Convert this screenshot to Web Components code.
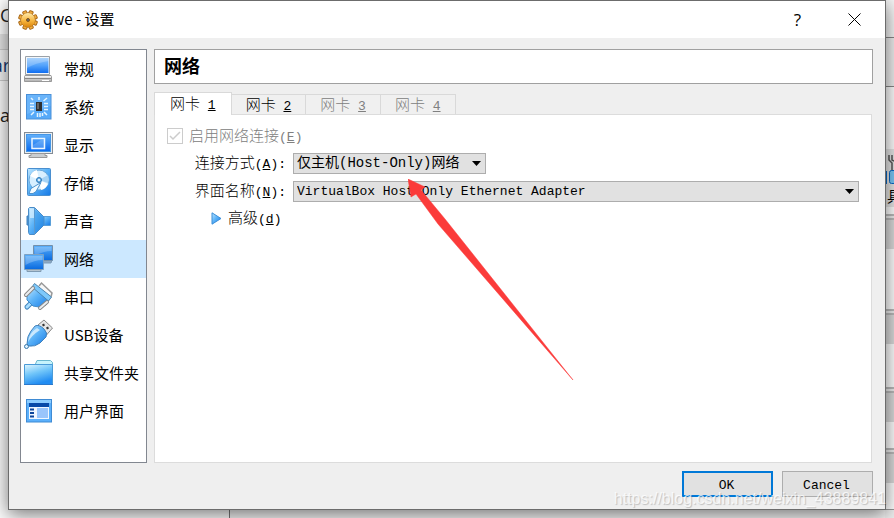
<!DOCTYPE html>
<html lang="zh-CN">
<head>
<meta charset="utf-8">
<title>qwe - 设置</title>
<style>
    body {
        margin: 0;
        min-height: 100vh;
        position: relative;
        overflow: hidden;
        background: #fff;
        color: #000;
        font-family: "Noto Sans CJK SC", sans-serif;
        font-size: 15px;
    }
</style>
</head>
<body>
<desktop-backdrop></desktop-backdrop>
<settings-dialog titulo="qwe - 设置">
    <nav-list slot="nav">
        <nav-item icon="general">常规</nav-item>
        <nav-item icon="system">系统</nav-item>
        <nav-item icon="display">显示</nav-item>
        <nav-item icon="storage">存储</nav-item>
        <nav-item icon="audio">声音</nav-item>
        <nav-item icon="network" selected>网络</nav-item>
        <nav-item icon="serial">串口</nav-item>
        <nav-item icon="usb">USB设备</nav-item>
        <nav-item icon="folder">共享文件夹</nav-item>
        <nav-item icon="ui">用户界面</nav-item>
    </nav-list>
    <page-heading>网络</page-heading>
    <tab-panel>
        <tab-button slot="tabs" number="1" active>网卡</tab-button>
        <tab-button slot="tabs" number="2">网卡</tab-button>
        <tab-button slot="tabs" number="3" disabled>网卡</tab-button>
        <tab-button slot="tabs" number="4" disabled>网卡</tab-button>
        <adapter-form></adapter-form>
    </tab-panel>
    <push-button slot="actions" primary>OK</push-button>
    <push-button slot="actions">Cancel</push-button>
</settings-dialog>
<pointer-arrow></pointer-arrow>
<water-mark>https://blog.csdn.net/weixin_43889841</water-mark>

<script>
const MONO = '"Liberation Mono", "Noto Sans CJK SC", monospace';

const blue = (id) => `
    <linearGradient id="${id}" x1="0" y1="0" x2="1" y2="1">
        <stop offset="0" stop-color="#bfe6ff"/><stop offset=".45" stop-color="#5db4f8"/><stop offset="1" stop-color="#1579e6"/>
    </linearGradient>`;

const ICONS = {
    general: `
        <defs><linearGradient id="g" x1="0" y1="0" x2="0" y2="1"><stop offset="0" stop-color="#93c6fb"/><stop offset=".5" stop-color="#52a2fb"/><stop offset="1" stop-color="#0f6df0"/></linearGradient>
        <linearGradient id="m" x1="0" y1="0" x2="0" y2="1"><stop offset="0" stop-color="#fff"/><stop offset="1" stop-color="#aaa"/></linearGradient></defs>
        <path d="M3.500 3.500h24v18h-24z" fill="#f4f7fa" stroke="#9aa1a8"/>
        <path d="M5 5h21.500v15H5z" fill="url(#g)"/>
        <path d="M5 5h21.500v3q-13 2-21.500 7z" fill="#fff" opacity=".22"/>
        <path d="M3 22.500h26l.5 1v5h-27v-5z" fill="url(#m)" stroke="#999"/>
        <path d="M3 25.500h26" stroke="#888"/><path d="M20 27.500h7" stroke="#fff"/>`,
    system: `
        <rect x="4.500" y="3.500" width="24.500" height="24.500" fill="#56a9f8" stroke="#4a90d8"/>
        <path d="M5 4h23.500v11L5 23z" fill="#8cc8ff" opacity=".35"/>
        <path d="M14 11h6v9h-6z" fill="#30302f"/><path d="M15 12h2v6h-2z" fill="#656565"/>
        <path d="M17 6v3M8 12.500h4M8 15.500h4M8 18.500h4M22 12.500h4M22 15.500h4M22 18.500h4M15.500 22v4M18 22v4M20.500 22v3M21.500 10l3.500-3M9 24l3-3M22 21l3 3M9 7l2 2" stroke="#e4f4ff" stroke-width="1.500"/>`,
    display: `
        <defs><linearGradient id="g" x1="0" y1="0" x2="0" y2="1"><stop offset="0" stop-color="#62b0fa"/><stop offset="1" stop-color="#086af0"/></linearGradient></defs>
        <rect x="2.500" y="3.500" width="28" height="21" fill="#e9eef2" stroke="#848c95"/>
        <rect x="4.500" y="5.500" width="24" height="17" fill="url(#g)" stroke="#4596e6"/>
        <path d="M10 9.500h12.500v10H10z" fill="none" stroke="#eaf5ff" stroke-width="1.500"/><path d="M11 16l8-5h3v8H11z" fill="#fff" opacity=".18"/>
        <path d="M9 24.500h14v2h2v2H7v-2h2z" fill="#c9cdd0" stroke="#999"/>`,
    storage: `
        <defs>${blue('g')}</defs>
        <rect x="5.500" y="1.500" width="23" height="27" rx="1" fill="url(#g)" stroke="#4a8fcf"/>
        <circle cx="17" cy="13" r="10" fill="#d8efff" stroke="#6aa9dc"/>
        <path d="M17 13L8 9a10 10 0 0 1 7-6zM17 13l9 4a10 10 0 0 1-7 6z" fill="#fff"/>
        <path d="M17 13l9-5a10 10 0 0 1 0 8z" fill="#a6d3f5"/>
        <circle cx="17" cy="13" r="2.500" fill="#71b8ed" stroke="#2f77b5"/><circle cx="17" cy="13" r="1" fill="#fff"/>
        <path d="M7 26.500l2-5 10-6-5 9-3 2z" fill="#f4fbff" stroke="#4d93cf"/>`,
    audio: `
        <defs>${blue('g')}</defs>
        <path d="M5 11h3v9H5z" fill="#4b98d9" stroke="#3c80bd"/>
        <path d="M17 11.500h11.500v9H17z" fill="url(#g)" stroke="#5a9fd8"/>
        <path d="M6.500 3.500l1-1h5l9.500 9.500v8l-9.500 9.500h-5l-1-2z" fill="url(#g)" stroke="#4a8cc8"/>
        <path d="M12.500 3v26" stroke="#5a9ad0"/><path d="M8 3.500h4V13H8z" fill="#d9f1ff" opacity=".7"/>
        <path d="M13 4l8.500 8.500v7L13 28z" fill="#2f8de0" opacity=".45"/>`,
    network: `
        <defs><linearGradient id="g" x1="0" y1="0" x2="0" y2="1"><stop offset="0" stop-color="#5cb0fa"/><stop offset="1" stop-color="#0869df"/></linearGradient></defs>
        <path d="M14 17h16l-1 3H14z" fill="#8ca9c3" stroke="#7c9bb8"/>
        <path d="M11.500 2.500h19v15h-19z" fill="url(#g)" stroke="#7490ab"/>
        <path d="M12.500 4h17v4q-8 0-17 5z" fill="#fff" opacity=".22"/>
        <path d="M2.500 11.500h19v15h-19z" fill="url(#g)" stroke="#7da2c4"/>
        <path d="M3.500 13h17v4q-8 0-17 5z" fill="#fff" opacity=".25"/>
        <path d="M5 26.500h14v2H5z" fill="#b6c4cf" stroke="#7f9bb3"/>`,
    serial: `
        <defs>${blue('g')}</defs>
        <path d="M17 5l2.500-3L30 12l-1 4" fill="#f6f6f6" stroke="#999" stroke-width="1.500"/>
        <path d="M10 21l-5 5" stroke="#3d83bd" stroke-width="5" stroke-linecap="round"/><path d="M10 21l-5 5" stroke="#a8ddff" stroke-width="3" stroke-linecap="round"/>
        <path d="M11 6L27 18l-3 6-7 2-6-1-6-6 0-7z" fill="url(#g)" stroke="#3f8bcb"/>
        <path d="M12.500 2.500L29.500 16l-3 4L10 6z" fill="#7dc8fb" stroke="#4d85af"/>
        <path d="M4 14l7-7M18 27l7-6" stroke="#888" stroke-width="4" stroke-linecap="round"/><path d="M4 14l7-7M18 27l7-6" stroke="#e9edf0" stroke-width="2" stroke-linecap="round"/>`,
    usb: `
        <defs>${blue('g')}</defs>
        <path d="M16 6l6-5 8.500 8-6 7z" fill="#e6e6e6" stroke="#888"/>
        <path d="M20.500 6.500l2-1M24.500 9.500l2-1" stroke="#333" stroke-width="2"/>
        <path d="M13 7q4-2 9 3 4 4 2 8l-6 6q-5 4-11 3l-2-2q0-8 4-13z" fill="url(#g)" stroke="#3f80bb"/>
        <path d="M6 23q1-9 9-14l3 2Q10 16 6 23z" fill="#e7f6ff" opacity=".75"/>
        <circle cx="4.500" cy="27.500" r="2" fill="#dff2ff" stroke="#3877aa"/>`,
    folder: `
        <defs><linearGradient id="g" x1="0" y1="0" x2=".4" y2="1"><stop offset="0" stop-color="#e0f7ff"/><stop offset=".5" stop-color="#70c5f9"/><stop offset="1" stop-color="#218cf2"/></linearGradient></defs>
        <path d="M13 8l2-4.500h13.500l2 2V10H13z" fill="#c6f3fc" stroke="#6bb8cf"/>
        <path d="M2.500 7.500h28v20h-28z" fill="url(#g)" stroke="#4a9bd8"/><path d="M2 27.500h29" stroke="#2a79cd"/>`,
    ui: `
        <rect x="4.500" y="4.500" width="25" height="22.500" fill="#5bb0fb" stroke="#3f8bd4"/>
        <path d="M5 5h24v3H5z" fill="#8bccff"/><path d="M7 8h20v4H7z" fill="#0749a8"/>
        <path d="M7 12h20v12H7z" fill="#f0f7ff"/><path d="M15 13h11v10H15z" fill="#99c5fb"/>
        <path d="M8 13.500h4v2H8zM8 17h4v2H8zM8 20.500h4v2H8z" fill="#0b459b"/>`
};

class UiElement extends HTMLElement {
    connectedCallback() {
        this.attachShadow({ mode: 'open' }).innerHTML = this.render();
    }
}

class DesktopBackdrop extends UiElement {
    render() {
        return `
            <style>
                :host {
                    position: absolute;
                    inset: 0;
                    display: grid;
                    grid-template-columns: 229px 1fr 9px;
                    overflow: hidden;
                    background: #fff;
                    font-family: "Open Sans", "Noto Sans CJK SC", sans-serif;
                }
                .left { display: flex; flex-direction: column; gap: 28px; padding-top: 4px; background: linear-gradient(#fff 34px, #e6e6e6 34px 49px, #ccc 49px 50px, #f4f4f4 50px 80px, #ccc 80px 81px, #fcfcfc 81px); }
                .left span { height: 22px; width: 10px; font-size: 18px; line-height: 22px; color: #222; }
                .left .cut { direction: rtl; }
                .left .blue { color: #12356b; }
                .mid { background: #f4f4f4; border-left: 1px solid #777; }
                .right {
                    background: linear-gradient(#f6f6f6 37px, #888 37px 38px, #f0f0f0 38px 86px, #888 86px 87px, #fff 87px 149px, #e7e7e7 149px 207px,
                        #fff 207px 214px, #bbb 214px 216px, #eee 216px 218px, #bbb 218px 220px, #dcdcdc 220px 249px, #fff 249px 309px,
                        #bbb 309px 311px, #eee 311px 313px, #bbb 313px 315px, #dcdcdc 315px 344px, #fff 344px 387px,
                        #bbb 387px 389px, #eee 389px 391px, #bbb 391px 393px, #dcdcdc 393px 422px, #fff 422px 448px,
                        #bbb 448px 450px, #eee 450px 452px, #bbb 452px 454px, #dcdcdc 454px 483px, #fff 483px 509px, #999 509px 510px, #eee 510px);
                    padding-top: 154px;
                    overflow: hidden;
                }
                svg { display: block; }
                .right span { display: block; width: 15px; padding-left: 2px; font-size: 15px; line-height: 20px; }
            </style>
            <div class="left"><span>C</span><span class="cut blue">ar</span><span class="cut">Na</span></div>
            <div class="mid"></div>
            <div class="right">
                <svg width="9" height="32" viewBox="0 0 9 32" fill="none"><path d="M4 1v5l3 3v8M9 7l-2-1V1" stroke="#555" stroke-width="1.500"/><rect x="4.500" y="16.500" width="12" height="13" rx="2" fill="#79c8f8" stroke="#0869c9"/><path d="M1 17v13" stroke="#0869c9" stroke-width="2"/></svg>
                <span>具</span>
            </div>`;
    }
}

class SettingsDialog extends UiElement {
    render() {
        let teeth = '';
        for (let a = 0; a < 360; a += 45) {
            teeth += `<rect x="8" y="0.500" width="4" height="5" rx="1" transform="rotate(${a + 22} 10 10)"/>`;
        }
        return `
            <style>
                :host {
                    position: relative;
                    box-sizing: border-box;
                    display: flex;
                    flex-direction: column;
                    min-height: calc(100vh - 8px);
                    margin: 0 8px 8px;
                    border: 1px solid #6c6c6c;
                    background: #efefef;
                    box-shadow: 0 4px 18px rgba(0, 0, 0, .55);
                }
                header { display: flex; align-items: center; height: 37px; padding: 0 2px 0 9px; background: #fff; }
                h1 { flex: 1; margin: 0; padding: 0 0 2px 5px; font-size: 15px; font-weight: 400; }
                header button { width: 57px; height: 37px; padding: 0; border: 0; background: none; font: 17px "Open Sans", sans-serif; }
                button svg { display: block; margin: auto; }
                main { flex: 1; display: grid; grid-template-columns: 127px 1fr; gap: 7px; padding: 11px 12px 0 11px; }
                .content { display: flex; flex-direction: column; gap: 8px; }
                footer { display: flex; justify-content: flex-end; gap: 9px; padding: 8px 12px 12px; }
            </style>
            <header>
                <svg width="20" height="20" viewBox="0 0 20 20">
                    <defs><linearGradient id="o" x1="0" y1="0" x2="0" y2="1"><stop offset="0" stop-color="#ffe9a8"/><stop offset=".55" stop-color="#f7b640"/><stop offset="1" stop-color="#dc860c"/></linearGradient></defs>
                    <g fill="#f3ac3a" stroke="#a8691a">${teeth}<circle cx="10" cy="10" r="7"/></g>
                    <circle cx="10" cy="10" r="7" fill="url(#o)"/><circle cx="10" cy="10" r="1.500" fill="#62666c" stroke="#865516"/>
                </svg>
                <h1>${this.getAttribute('titulo')}</h1>
                <button aria-label="help">?</button>
                <button aria-label="close"><svg width="13" height="13" viewBox="0 0 13 13"><path d="M.5.5l12 12M12.500.5l-12 12" stroke="#000"/></svg></button>
            </header>
            <main>
                <slot name="nav"></slot>
                <div class="content"><slot></slot></div>
            </main>
            <footer><slot name="actions"></slot></footer>`;
    }
}

class NavList extends UiElement {
    render() {
        return `
            <style>
                :host { display: block; border: 1px solid #828790; background: #fff; }
                nav { display: flex; flex-direction: column; }
            </style>
            <nav><slot></slot></nav>`;
    }
}

class NavItem extends UiElement {
    render() {
        return `
            <style>
                :host { display: block; }
                :host([selected]) { background: #cce8ff; }
                button { display: flex; align-items: center; gap: 10px; box-sizing: border-box; width: 100%; height: 38px; padding: 0 0 2px 1px; border: 0; background: none; color: inherit; font: inherit; white-space: nowrap; }
                svg { flex: none; margin-top: 2px; }
            </style>
            <button><svg width="32" height="32" viewBox="0 0 32 32" fill="none">${ICONS[this.getAttribute('icon')]}</svg><slot></slot></button>`;
    }
}

class PageHeading extends UiElement {
    render() {
        return `
            <style>
                :host { display: flex; align-items: center; box-sizing: border-box; height: 35px; padding: 0 9px 3px; border: 1px solid #a0a0a0; background: #fff; }
                h2 { margin: 0; font-size: 18px; line-height: 24px; }
            </style>
            <h2><slot></slot></h2>`;
    }
}

class TabPanel extends UiElement {
    render() {
        return `
            <style>
                :host { flex: 1; display: flex; flex-direction: column; margin-right: 1px; }
                .tabs { display: flex; align-items: flex-end; height: 23px; }
                .panel { flex: 1; margin-top: -1px; padding: 11px 12px; border: 1px solid #dcdcdc; background: #fff; }
            </style>
            <div class="tabs" role="tablist"><slot name="tabs"></slot></div>
            <div class="panel"><slot></slot></div>`;
    }
}

class TabButton extends UiElement {
    render() {
        return `
            <style>
                :host { display: block; }
                :host([active]) { position: relative; z-index: 1; }
                button { display: block; box-sizing: border-box; height: 21px; padding: 0 14px; border: 1px solid #d9d9d9; border-left: 0; background: #f0f0f0; color: #000; font: 15px/18px "Noto Sans CJK SC", sans-serif; font-weight: 300; white-space: pre; }
                span { font: 13px/18px ${MONO}; }
                :host([active]) button { height: 23px; padding: 0 15px; border-left: 1px solid #d9d9d9; border-bottom: 0; background: #fff; }
                :host([disabled]) button { color: #808080; }
            </style>
            <button role="tab" ${this.hasAttribute('disabled') ? 'disabled' : ''}><slot></slot><span> <u>${this.getAttribute('number')}</u></span></button>`;
    }
}

class AdapterForm extends UiElement {
    render() {
        const arrow = '<svg width="9" height="5" viewBox="0 0 9 5"><path d="M0 0h9L4.500 5z"/></svg>';
        return `
            <style>
                :host { display: block; font-weight: 300; }
                form { display: flex; flex-direction: column; gap: 7px; }
                .check { display: flex; align-items: center; gap: 6px; height: 20px; color: #808080; }
                .box { display: grid; }
                .box > * { grid-area: 1 / 1; }
                input { appearance: none; box-sizing: border-box; width: 16px; height: 16px; margin: 0; border: 1px solid #ccc; background: #fff; }
                .fields { display: flex; flex-direction: column; gap: 7px; margin-top: -1px; }
                .row { display: grid; grid-template-columns: 119px auto; gap: 7px; align-items: center; justify-content: start; height: 21px; }
                .row.wide { grid-template-columns: 119px 1fr; justify-content: stretch; }
                .row label { text-align: right; white-space: nowrap; line-height: 20px; }
                span { font: 13px/20px ${MONO}; }
                .combo { display: grid; align-items: center; }
                .combo > * { grid-area: 1 / 1; }
                .combo svg { justify-self: end; margin-right: 5px; pointer-events: none; }
                select { appearance: none; box-sizing: border-box; width: 100%; height: 21px; padding: 0 25px 0 3px; border: 1px solid #adadad; border-radius: 0; background: #e1e1e1; color: #000; font: 14px/19px ${MONO}; }
                .wide select { font-size: 13px; }
                .more { align-self: flex-start; display: flex; align-items: center; gap: 6px; height: 20px; margin-left: 44px; padding: 0; border: 0; background: none; color: #000; font: inherit; }
            </style>
            <form>
                <div class="check">
                    <div class="box"><input type="checkbox" id="enable" checked disabled><svg width="16" height="16" viewBox="0 0 16 16"><path d="M3 8l3 3 7-7" fill="none" stroke="#ccc" stroke-width="1.500"/></svg></div>
                    <label for="enable">启用网络连接<span>(<u>E</u>)</span></label>
                </div>
                <div class="fields">
                    <div class="row">
                        <label for="attach">连接方式<span>(<u>A</u>):</span></label>
                        <div class="combo"><select id="attach"><option>仅主机(Host-Only)网络</option></select>${arrow}</div>
                    </div>
                    <div class="row wide">
                        <label for="name">界面名称<span>(<u>N</u>):</span></label>
                        <div class="combo"><select id="name"><option>VirtualBox Host-Only Ethernet Adapter</option></select>${arrow}</div>
                    </div>
                    <button type="button" class="more">
                        <svg width="11" height="13" viewBox="0 0 11 13"><defs>${blue('t')}</defs><path d="M1 .8l9 5.700-9 5.700z" fill="url(#t)" stroke="#3b8ed8"/></svg>
                        <div>高级<span>(<u>d</u>)</span></div>
                    </button>
                </div>
            </form>`;
    }
}

class PushButton extends UiElement {
    render() {
        return `
            <style>
                :host { display: block; }
                button { box-sizing: border-box; width: 91px; height: 26px; padding: 2px 2px 0 0; border: 1px solid #adadad; background: #e1e1e1; color: #000; font: 13px ${MONO}; }
                :host([primary]) button { border: 2px solid #0078d7; }
            </style>
            <button><slot></slot></button>`;
    }
}

// red arrow drawn on top of the form
class PointerArrow extends UiElement {
    render() {
        return `
            <style>
                :host { position: absolute; left: 408px; top: 179px; pointer-events: none; }
                svg { display: block; }
            </style>
            <svg width="166" height="202" viewBox="0 0 166 202"><path d="M0 0l17 8-4 3 24 29 128 161L30 45 8 15l-5 3z" fill="#fb3b3a" stroke="#fb3b3a" stroke-width=".5"/></svg>`;
    }
}

class WaterMark extends UiElement {
    render() {
        return `
            <style>
                :host { position: absolute; right: 8px; bottom: 8px; font: 16px/22px "Liberation Sans", sans-serif; color: rgba(255, 255, 255, .75); text-shadow: 1px 1px 1px rgba(0, 0, 0, .2); pointer-events: none; white-space: nowrap; }
            </style>
            <slot></slot>`;
    }
}

customElements.define('desktop-backdrop', DesktopBackdrop);
customElements.define('settings-dialog', SettingsDialog);
customElements.define('nav-list', NavList);
customElements.define('nav-item', NavItem);
customElements.define('page-heading', PageHeading);
customElements.define('tab-panel', TabPanel);
customElements.define('tab-button', TabButton);
customElements.define('adapter-form', AdapterForm);
customElements.define('push-button', PushButton);
customElements.define('pointer-arrow', PointerArrow);
customElements.define('water-mark', WaterMark);
</script>
</body>
</html>
